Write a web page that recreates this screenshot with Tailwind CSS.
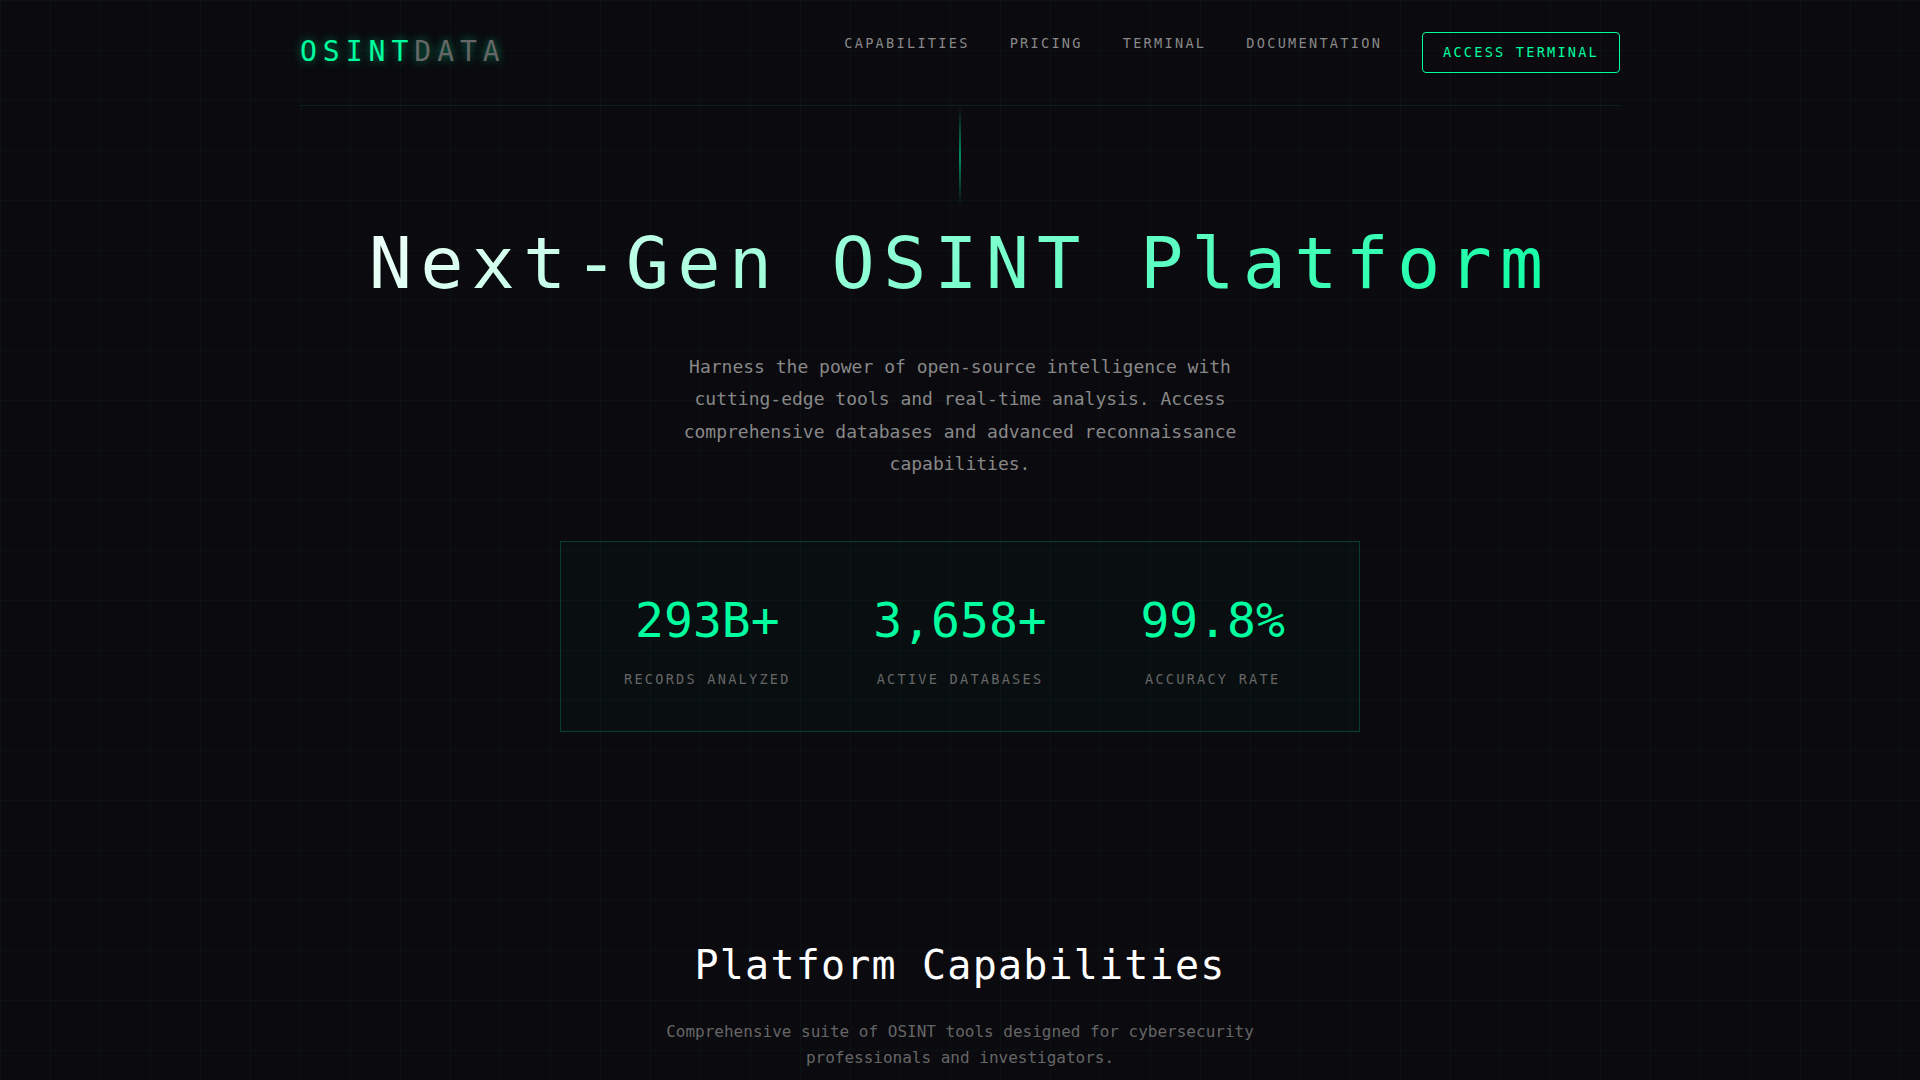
<!DOCTYPE html>
<html lang="en">
<head>
    <meta charset="UTF-8">
    <meta name="viewport" content="width=device-width, initial-scale=1.0">
    <title>OSINTDATA</title>
    <script src="https://cdn.jsdelivr.net/npm/@tailwindcss/browser@4"></script>
</head>
<body class="bg-[#0a0a0f] text-white font-['DejaVu_Sans_Mono',monospace] leading-[1.6] h-[1080px] overflow-hidden relative">
    <!-- grid overlay -->
    <div class="absolute inset-0 pointer-events-none bg-[linear-gradient(rgba(0,255,159,0.03)_1px,transparent_1px),linear-gradient(90deg,rgba(0,255,159,0.03)_1px,transparent_1px)] bg-[size:50px_50px]"></div>

    <div class="max-w-[1400px] mx-auto px-10">
        <header class="flex justify-between items-center py-8 border-b border-[#00ff9f]/10">
            <div class="text-[28px] leading-none tracking-[6px] text-[#00ff9f] [text-shadow:0_0_10px_rgba(0,255,159,0.5)] -mt-0.5">OSINT<span class="text-[#666]">DATA</span></div>
            <nav>
                <ul class="flex gap-10">
                    <li><a href="#" class="block text-[13.6px] leading-[23px] tracking-[2.26px] text-[#888]">CAPABILITIES</a></li>
                    <li><a href="#" class="block text-[13.6px] leading-[23px] tracking-[2.26px] text-[#888]">PRICING</a></li>
                    <li><a href="#" class="block text-[13.6px] leading-[23px] tracking-[2.26px] text-[#888]">TERMINAL</a></li>
                    <li><a href="#" class="block text-[13.6px] leading-[23px] tracking-[2.26px] text-[#888]">DOCUMENTATION</a></li>
                    <li><a href="#" class="flex items-center h-[41px] px-5 border border-[#00ff9f] rounded text-[13.6px] tracking-[2.21px] text-[#00ff9f]">ACCESS TERMINAL</a></li>
                </ul>
            </nav>
        </header>

        <section class="relative pt-[114px] text-center">
            <div class="absolute top-0 left-1/2 -ml-px w-[2px] h-[100px] bg-gradient-to-b from-transparent via-[#00ff9f]/55 to-transparent"></div>
            <h1 class="text-[72px] leading-[1.2] tracking-[0.112em] bg-[linear-gradient(135deg,#ffffff,#00ff9f)] bg-clip-text text-transparent mb-[44.6px]">Next-Gen OSINT Platform</h1>
            <p class="max-w-[600px] mx-auto text-[18px] leading-[1.8] text-[#888] mb-[60.4px]">Harness the power of open-source intelligence with cutting-edge tools and real-time analysis. Access comprehensive databases and advanced reconnaissance capabilities.</p>

            <div class="max-w-[800px] mx-auto grid grid-cols-3 gap-10 p-10 border border-[#00ff9f]/20 bg-[#00ff9f]/[0.02]">
                <div>
                    <div class="text-[48px] leading-[1.6] text-[#00ff9f] mb-[10.5px]">293B+</div>
                    <div class="text-[13.6px] leading-[1.6] tracking-[2.23px] text-[#666]">RECORDS ANALYZED</div>
                </div>
                <div>
                    <div class="text-[48px] leading-[1.6] text-[#00ff9f] mb-[10.5px]">3,658+</div>
                    <div class="text-[13.6px] leading-[1.6] tracking-[2.23px] text-[#666]">ACTIVE DATABASES</div>
                </div>
                <div>
                    <div class="text-[48px] leading-[1.6] text-[#00ff9f] mb-[10.5px]">99.8%</div>
                    <div class="text-[13.6px] leading-[1.6] tracking-[2.23px] text-[#666]">ACCURACY RATE</div>
                </div>
            </div>
        </section>

        <section class="pt-[201px] text-center">
            <h2 class="text-[40px] leading-[1.6] tracking-[0.03em] text-white mb-[22px]">Platform Capabilities</h2>
            <p class="max-w-[600px] mx-auto text-[16px] leading-[1.6] text-[#666]">Comprehensive suite of OSINT tools designed for cybersecurity professionals and investigators.</p>
        </section>
    </div>
</body>
</html>
